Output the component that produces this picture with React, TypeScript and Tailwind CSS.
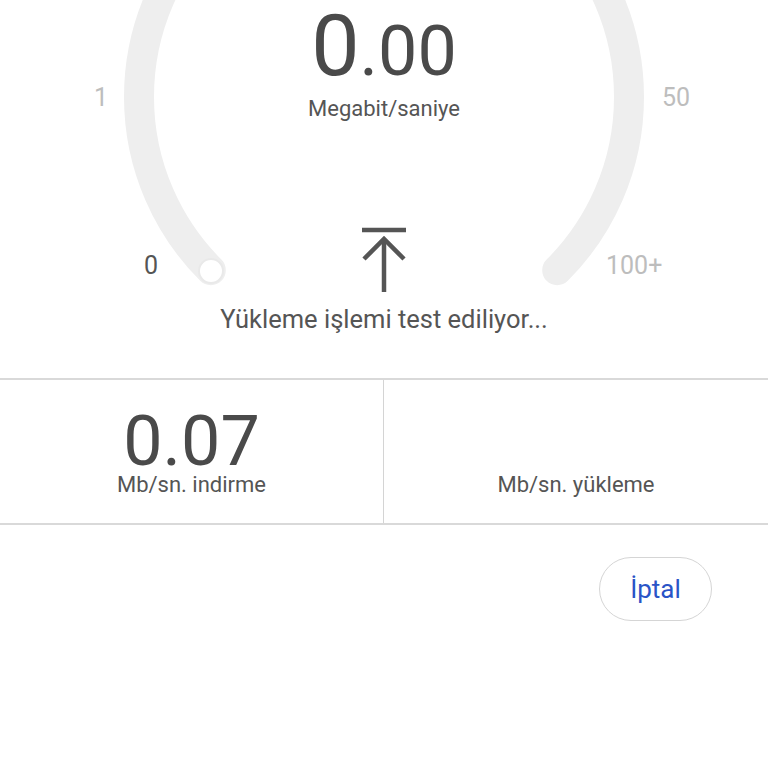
import React from 'react';

const font = { fontFamily: 'Roboto, "Noto Sans", sans-serif' };

function Gauge() {
  return (
    <div className="relative h-[378px] w-full overflow-hidden">
      {/* gauge track */}
      <svg className="absolute inset-0" width="768" height="378" viewBox="0 0 768 378">
        <path
          d="M 210.8 270.2 A 245 245 0 1 1 557.2 270.2"
          fill="none"
          stroke="#eeeeee"
          strokeWidth="30"
          strokeLinecap="round"
        />
        <circle cx="211" cy="271" r="12" fill="#ffffff" stroke="#e9e9e9" strokeWidth="2" />
      </svg>

      {/* tick labels */}
      <span className="absolute left-[94px] top-[85px] text-[25px] leading-none text-[#bdbdbd]">1</span>
      <span className="absolute left-[662px] top-[85px] text-[25px] leading-none text-[#bdbdbd]">50</span>
      <span className="absolute left-[144px] top-[253px] text-[25px] leading-none text-[#555555]">0</span>
      <span className="absolute left-[606px] top-[253px] text-[25px] leading-none text-[#bdbdbd]">100+</span>

      <div className="relative flex flex-col items-center text-[#4a4a4a]">
        <div className="mt-[3px] flex items-baseline leading-none">
          <span className="text-[86px] leading-none">0</span>
          <span className="text-[70px] leading-none">.00</span>
        </div>
        <div className="mt-[9px] text-[22px] leading-none text-[#555555]">Megabit/saniye</div>
        <svg className="mt-[106px]" width="48" height="66" viewBox="0 0 48 66">
          <line x1="2" y1="4" x2="46" y2="4" stroke="#555555" strokeWidth="4.5" />
          <line x1="24" y1="13" x2="24" y2="66" stroke="#555555" strokeWidth="4.5" />
          <polyline points="4,33 24,13 44,33" fill="none" stroke="#555555" strokeWidth="4.5" />
        </svg>
        <div className="mt-[15px] text-[25.5px] leading-none text-[#555555]">Yükleme işlemi test ediliyor...</div>
      </div>
    </div>
  );
}

function ResultCell({ value, label }: { value?: string; label: string }) {
  return (
    <div className="flex flex-col items-center justify-end pb-[27px] text-[#4a4a4a]">
      {value && <div className="text-[70px] leading-[58px]">{value}</div>}
      <div className="mt-[4px] text-[22px] leading-none text-[#555555]">{label}</div>
    </div>
  );
}

export default function App() {
  return (
    <div className="h-[768px] w-[768px] overflow-hidden bg-white" style={font}>
      <Gauge />

      <div className="grid h-[147px] grid-cols-2 border-y-2 border-[#d9d9d9]">
        <div className="flex flex-col justify-end border-r-[1.5px] border-[#d4d4d4]">
          <ResultCell value="0.07" label="Mb/sn. indirme" />
        </div>
        <ResultCell label="Mb/sn. yükleme" />
      </div>

      <div className="flex justify-end pr-[56px] pt-[32px]">
        <button className="h-[64px] w-[113px] rounded-full border-[1.5px] border-[#d5d5d5] bg-white text-[26px] text-[#2a54c7]">
          İptal
        </button>
      </div>
    </div>
  );
}
